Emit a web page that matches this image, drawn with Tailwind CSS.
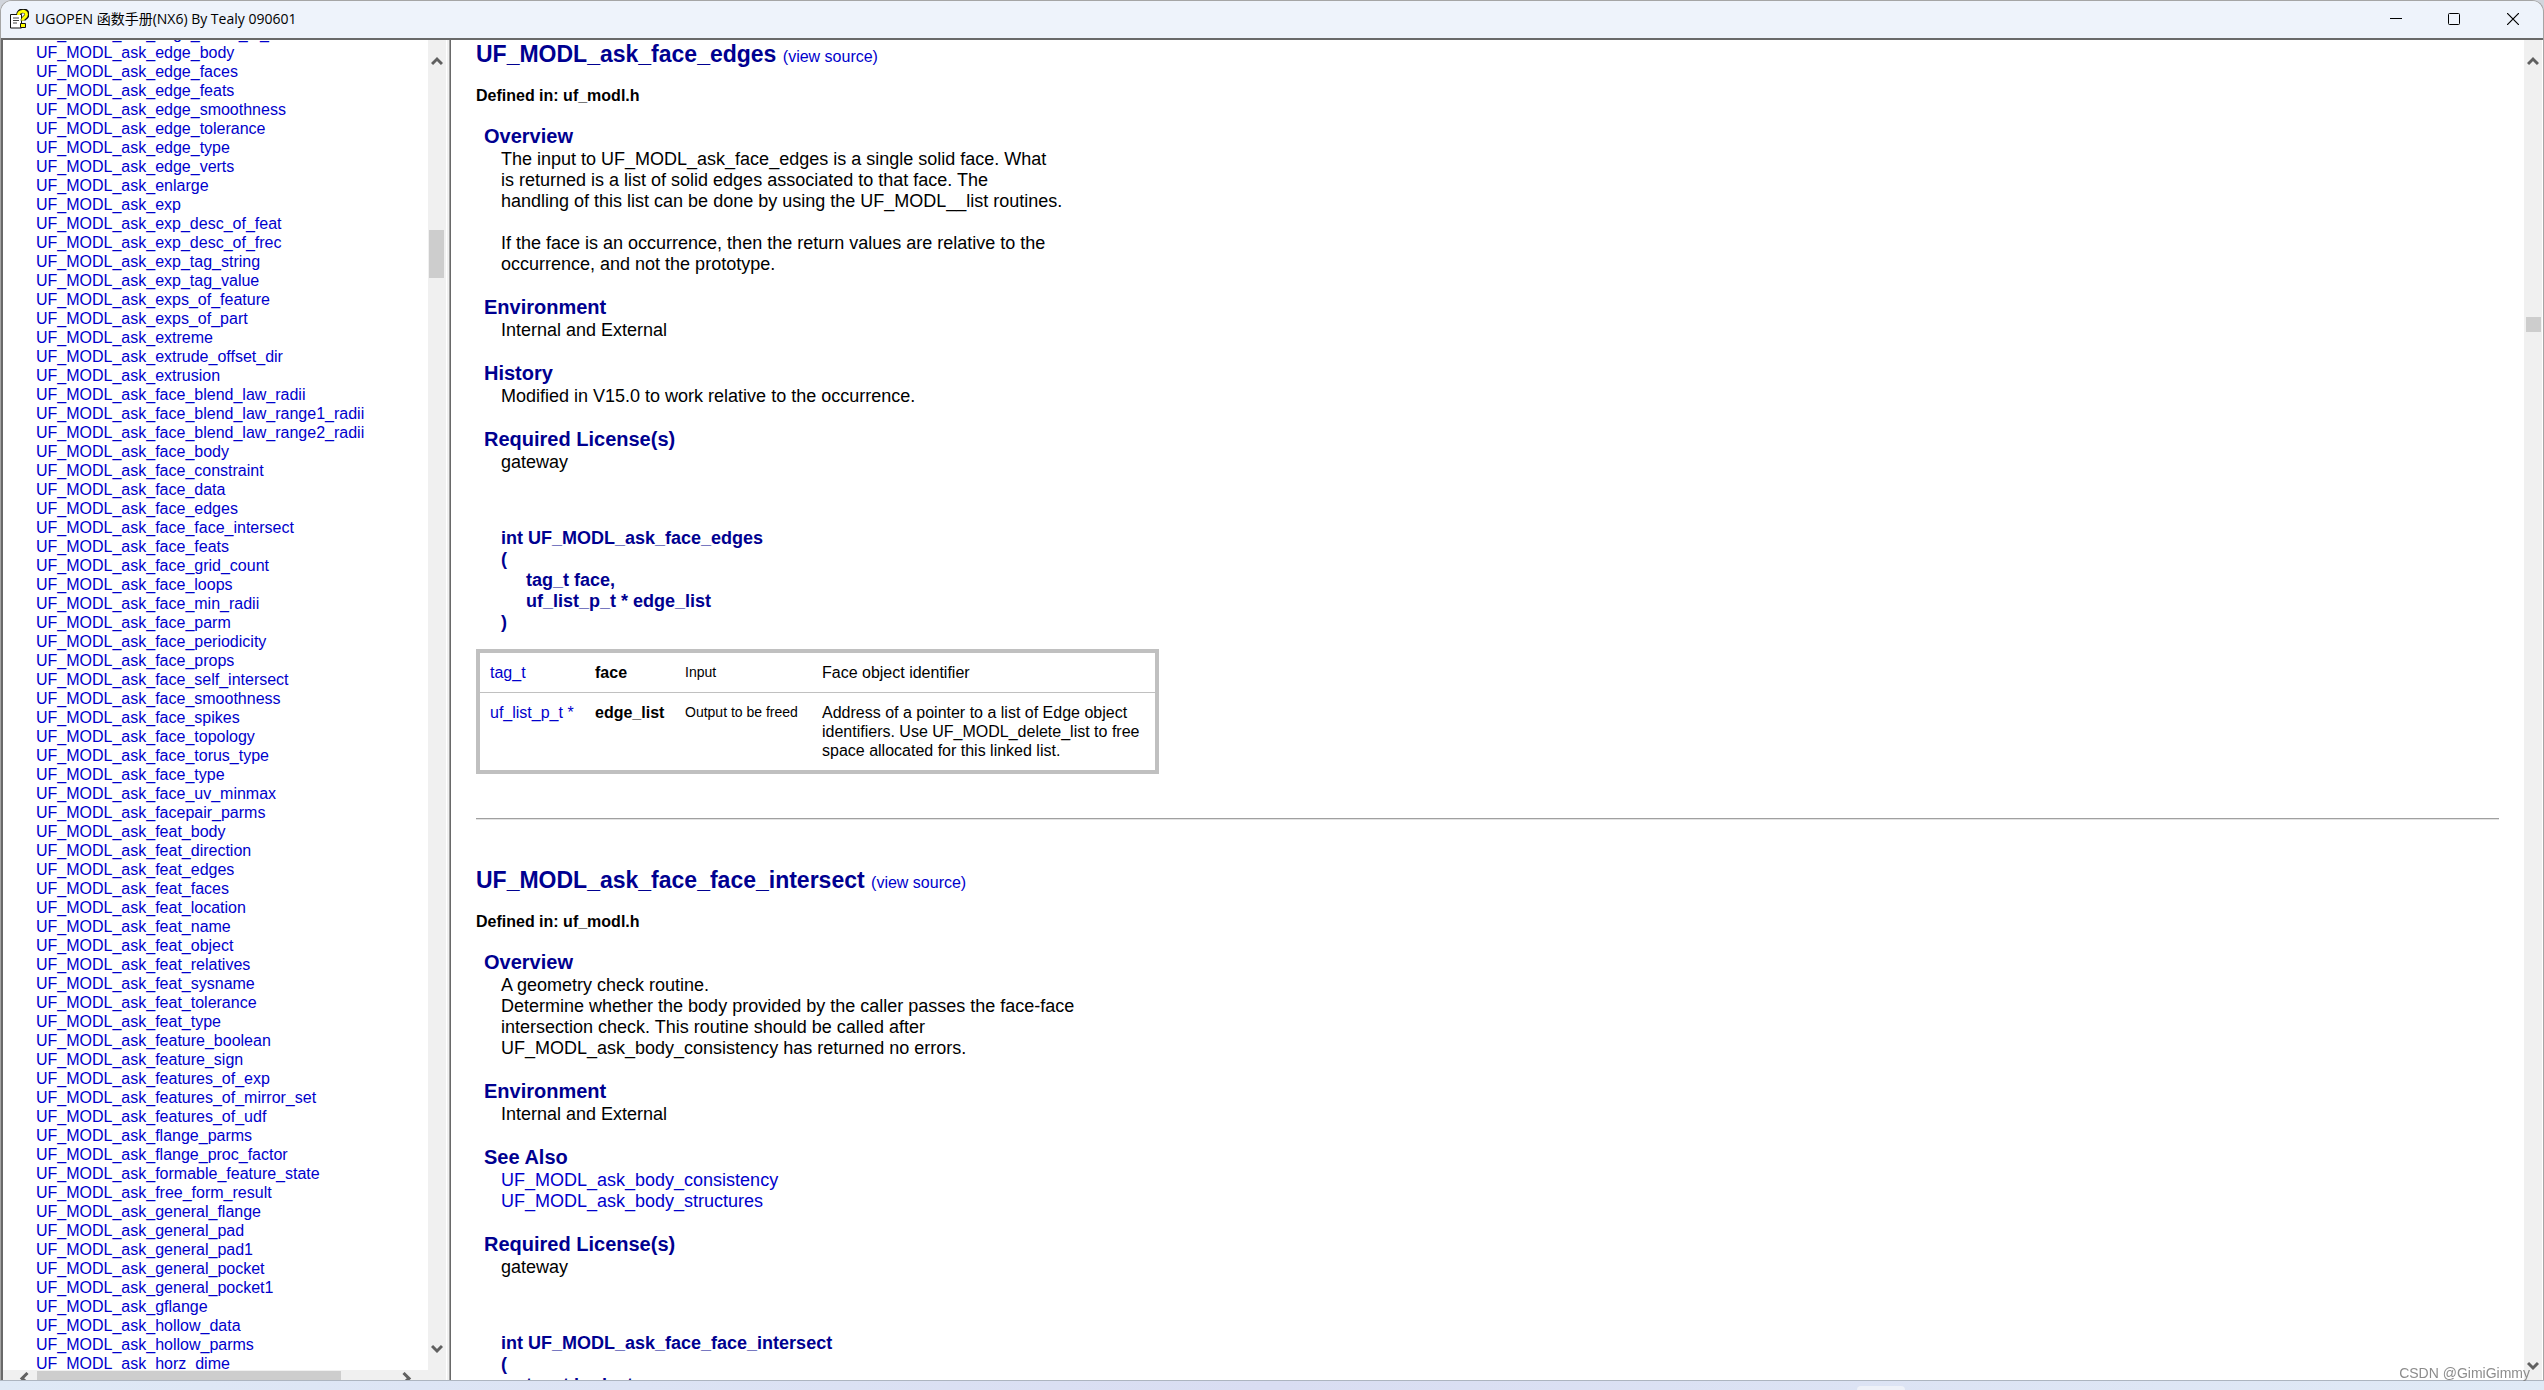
<!DOCTYPE html>
<html lang="zh-CN">
<head>
<meta charset="utf-8">
<title>UGOPEN 函数手册(NX6) By Tealy 090601</title>
<script src="https://cdn.jsdelivr.net/npm/@tailwindcss/browser@4"></script>
</head>
<body class="h-screen overflow-hidden flex flex-col bg-gray-300 font-['Liberation_Sans',Arial,sans-serif] text-black">
<div class="flex-1 min-h-0 flex flex-col bg-[#f0f0f0] border border-b-0 border-[#a5a5a5] rounded-t-xl overflow-hidden">
  <header class="h-[37px] shrink-0 flex items-center bg-[#eef3fb] pl-2 pb-px">
    <svg class="size-5 shrink-0" viewBox="0 0 20 20">
      <path d="M1.500 5.500h11v13.500h-11z" fill="#fff" stroke="#111"/>
      <path d="M4 9h6M4 11.500h6M4 14h4" stroke="#444"/>
      <path d="M9.500 6C9.500 1 18 0 18 5.500c0 3-4 3-4 6" fill="none" stroke="#111" stroke-width="5"/>
      <path d="M9.500 6C9.500 1.500 17.500 1 17.500 5.500c0 3-4 3-4 6" fill="none" stroke="#ffff00" stroke-width="3"/>
      <path d="M11.500 14.500h5v4h-5z" fill="#ff0" stroke="#111"/>
    </svg>
    <h1 class="ml-[6px] font-['Open_Sans','Noto_Sans_CJK_SC',sans-serif] text-[14px] leading-5 whitespace-nowrap">UGOPEN 函数手册(NX6) By Tealy 090601</h1>
    <div class="ml-auto flex self-stretch">
      <button class="w-[58px] grid place-items-center" aria-label="Minimize"><svg class="size-3" viewBox="0 0 12 12"><path d="M0 5.500h12" stroke="#000"/></svg></button>
      <button class="w-[58px] grid place-items-center" aria-label="Maximize"><svg class="size-3" viewBox="0 0 12 12"><rect x=".5" y=".5" width="11" height="11" rx="1" fill="none" stroke="#000"/></svg></button>
      <button class="w-[60px] grid place-items-center" aria-label="Close"><svg class="size-3" viewBox="0 0 12 12"><path d="M0 0l12 12M12 0L0 12" stroke="#000" stroke-width="1.200"/></svg></button>
    </div>
  </header>
  <main class="flex-1 min-h-0 flex bg-white border-t-2 border-[#696969]">
    <div class="w-[445px] shrink-0 flex flex-col border-l-2 border-[#696969]">
      <div class="flex-1 min-h-0 flex">
        <nav class="flex-1 overflow-hidden flex flex-col pl-[33px] text-[16px] leading-[19px] text-[#0000cc] whitespace-nowrap" aria-label="Functions">
          <div id="index" class="-mt-4 flex flex-col items-start"></div>
        </nav>
        <div class="w-[18px] shrink-0 bg-[#f0f0f0] flex flex-col items-center pt-4 pb-4 pr-px">
          <svg class="w-3 h-[10px]" viewBox="0 0 12 10"><path d="M1 8l5-5 5 5" fill="none" stroke="#606060" stroke-width="3"/></svg>
          <div class="mt-[164px] w-[15px] h-12 bg-[#cdcdcd]"></div>
          <svg class="mt-auto w-3 h-[10px]" viewBox="0 0 12 10"><path d="M1 2l5 5 5-5" fill="none" stroke="#606060" stroke-width="3"/></svg>
        </div>
      </div>
      <div class="h-[10px] shrink-0 bg-[#f0f0f0] flex items-end pl-4 overflow-hidden">
        <svg class="w-[10px] h-[8px]" viewBox="0 0 10 8"><path d="M8.500 1L3 6.500 6 9" fill="none" stroke="#606060" stroke-width="3"/></svg>
        <div class="ml-2 w-[304px] h-[9px] bg-[#cdcdcd]"></div>
        <svg class="ml-[61px] w-[10px] h-[8px]" viewBox="0 0 10 8"><path d="M1.500 1L7 6.500 4 9" fill="none" stroke="#606060" stroke-width="3"/></svg>
      </div>
    </div>
    <div class="w-[3px] shrink-0 bg-[#f0f0f0] border-l border-white"></div>
    <div class="w-px shrink-0 bg-[#a0a0a0]"></div>
    <article class="flex-1 min-w-0 overflow-hidden border-l border-[#696969] pl-[25px] pr-[25px] text-[18px] leading-[21px]">
      <section>
        <h2 class="text-[23px] leading-7 font-bold text-[#000090]">UF_MODL_ask_face_edges <a href="#source" class="text-[16px] font-normal text-[#0000cc]">(view source)</a></h2>
        <p class="mt-[15px] text-[16px] leading-[19px] font-bold">Defined in: uf_modl.h</p>
        <div class="pl-2">
          <h3 class="mt-[19px] pb-px text-[20px] leading-6 font-bold text-[#000090]">Overview</h3>
          <p class="pl-[17px]">The input to UF_MODL_ask_face_edges is a single solid face. What<br>is returned is a list of solid edges associated to that face. The<br>handling of this list can be done by using the UF_MODL__list routines.<br><br>If the face is an occurrence, then the return values are relative to the<br>occurrence, and not the prototype.</p>
          <h3 class="mt-5 pb-px text-[20px] leading-6 font-bold text-[#000090]">Environment</h3>
          <p class="pl-[17px]">Internal and External</p>
          <h3 class="mt-5 pb-px text-[20px] leading-6 font-bold text-[#000090]">History</h3>
          <p class="pl-[17px]">Modified in V15.0 to work relative to the occurrence.</p>
          <h3 class="mt-5 pb-px text-[20px] leading-6 font-bold text-[#000090]">Required License(s)</h3>
          <p class="pl-[17px]">gateway</p>
          <div class="mt-[55px] pl-[17px] font-bold text-[#000090]">
            <p>int UF_MODL_ask_face_edges</p>
            <p>(</p>
            <p class="pl-[25px]">tag_t face,<br>uf_list_p_t * edge_list</p>
            <p>)</p>
          </div>
        </div>
        <table class="mt-4 border-4 border-[#c0c0c0] text-[16px] leading-[19px] text-left">
          <tr class="align-top border-b border-[#c0c0c0]">
            <td class="pl-[10px] py-[10px] w-[107px] text-[#0000cc]"><a href="#tag_t">tag_t</a></td>
            <td class="py-[10px] pl-[10px] w-[90px] font-bold">face</td>
            <td class="py-[10px] pl-[10px] w-[137px] text-[14px]">Input</td>
            <td class="py-[10px] pl-[10px] w-[345px]">Face object identifier</td>
          </tr>
          <tr class="align-top">
            <td class="pl-[10px] py-[10px] text-[#0000cc]"><a href="#uf_list_p_t">uf_list_p_t *</a></td>
            <td class="py-[10px] pl-[10px] font-bold">edge_list</td>
            <td class="py-[10px] pl-[10px] text-[14px]">Output to be freed</td>
            <td class="py-[10px] pl-[10px] whitespace-nowrap">Address of a pointer to a list of Edge object<br>identifiers. Use UF_MODL_delete_list to free<br>space allocated for this linked list.</td>
          </tr>
        </table>
      </section>
      <hr class="mt-11 h-[2px] border-t border-b border-t-[#a0a0a0] border-b-[#e3e3e3]">
      <section>
        <h2 class="mt-[46px] text-[23px] leading-7 font-bold text-[#000090]">UF_MODL_ask_face_face_intersect <a href="#source2" class="text-[16px] font-normal text-[#0000cc]">(view source)</a></h2>
        <p class="mt-[15px] text-[16px] leading-[19px] font-bold">Defined in: uf_modl.h</p>
        <div class="pl-2">
          <h3 class="mt-[19px] pb-px text-[20px] leading-6 font-bold text-[#000090]">Overview</h3>
          <p class="pl-[17px]">A geometry check routine.<br>Determine whether the body provided by the caller passes the face-face<br>intersection check. This routine should be called after<br>UF_MODL_ask_body_consistency has returned no errors.</p>
          <h3 class="mt-5 pb-px text-[20px] leading-6 font-bold text-[#000090]">Environment</h3>
          <p class="pl-[17px]">Internal and External</p>
          <h3 class="mt-5 pb-px text-[20px] leading-6 font-bold text-[#000090]">See Also</h3>
          <p class="pl-[17px] text-[#0000cc]"><a href="#consistency">UF_MODL_ask_body_consistency</a><br><a href="#structures">UF_MODL_ask_body_structures</a></p>
          <h3 class="mt-5 pb-px text-[20px] leading-6 font-bold text-[#000090]">Required License(s)</h3>
          <p class="pl-[17px]">gateway</p>
          <div class="mt-[55px] pl-[17px] font-bold text-[#000090]">
            <p>int UF_MODL_ask_face_face_intersect</p>
            <p>(</p>
            <p class="pl-[25px]">tag_t body_tag,</p>
          </div>
        </div>
      </section>
    </article>
    <div class="w-[18px] mr-px shrink-0 bg-[#f0f0f0] flex flex-col items-center pt-4 pb-[9px]">
      <svg class="w-3 h-[10px]" viewBox="0 0 12 10"><path d="M1 8l5-5 5 5" fill="none" stroke="#606060" stroke-width="3"/></svg>
      <div class="mt-[251px] w-[15px] h-[15px] bg-[#cdcdcd]"></div>
      <svg class="mt-auto w-3 h-[10px]" viewBox="0 0 12 10"><path d="M1 2l5 5 5-5" fill="none" stroke="#606060" stroke-width="3"/></svg>
    </div>
  </main>
</div>
<footer class="h-[10px] shrink-0 border-t border-[#adb5c0] bg-linear-to-r from-[#dfe9f6] via-[#d9ddf2] to-[#e0eaf6] flex items-end">
  <div class="ml-[73%] w-12 h-1 rounded-t bg-[#eef1f8]"></div>
</footer>
<p class="fixed right-[14px] bottom-[7px] text-[14px] leading-5 text-[#808080]/90">CSDN @GimiGimmy</p>
<script>
const names = `edge_curve_id_
edge_body
edge_faces
edge_feats
edge_smoothness
edge_tolerance
edge_type
edge_verts
enlarge
exp
exp_desc_of_feat
exp_desc_of_frec
exp_tag_string
exp_tag_value
exps_of_feature
exps_of_part
extreme
extrude_offset_dir
extrusion
face_blend_law_radii
face_blend_law_range1_radii
face_blend_law_range2_radii
face_body
face_constraint
face_data
face_edges
face_face_intersect
face_feats
face_grid_count
face_loops
face_min_radii
face_parm
face_periodicity
face_props
face_self_intersect
face_smoothness
face_spikes
face_topology
face_torus_type
face_type
face_uv_minmax
facepair_parms
feat_body
feat_direction
feat_edges
feat_faces
feat_location
feat_name
feat_object
feat_relatives
feat_sysname
feat_tolerance
feat_type
feature_boolean
feature_sign
features_of_exp
features_of_mirror_set
features_of_udf
flange_parms
flange_proc_factor
formable_feature_state
free_form_result
general_flange
general_pad
general_pad1
general_pocket
general_pocket1
gflange
hollow_data
hollow_parms
horz_dime`.split("\n");
const list = document.getElementById("index");
for (const n of names) {
  const a = document.createElement("a");
  a.href = "#" + n;
  a.textContent = "UF_MODL_ask_" + n;
  list.append(a);
}
</script>
</body>
</html>
